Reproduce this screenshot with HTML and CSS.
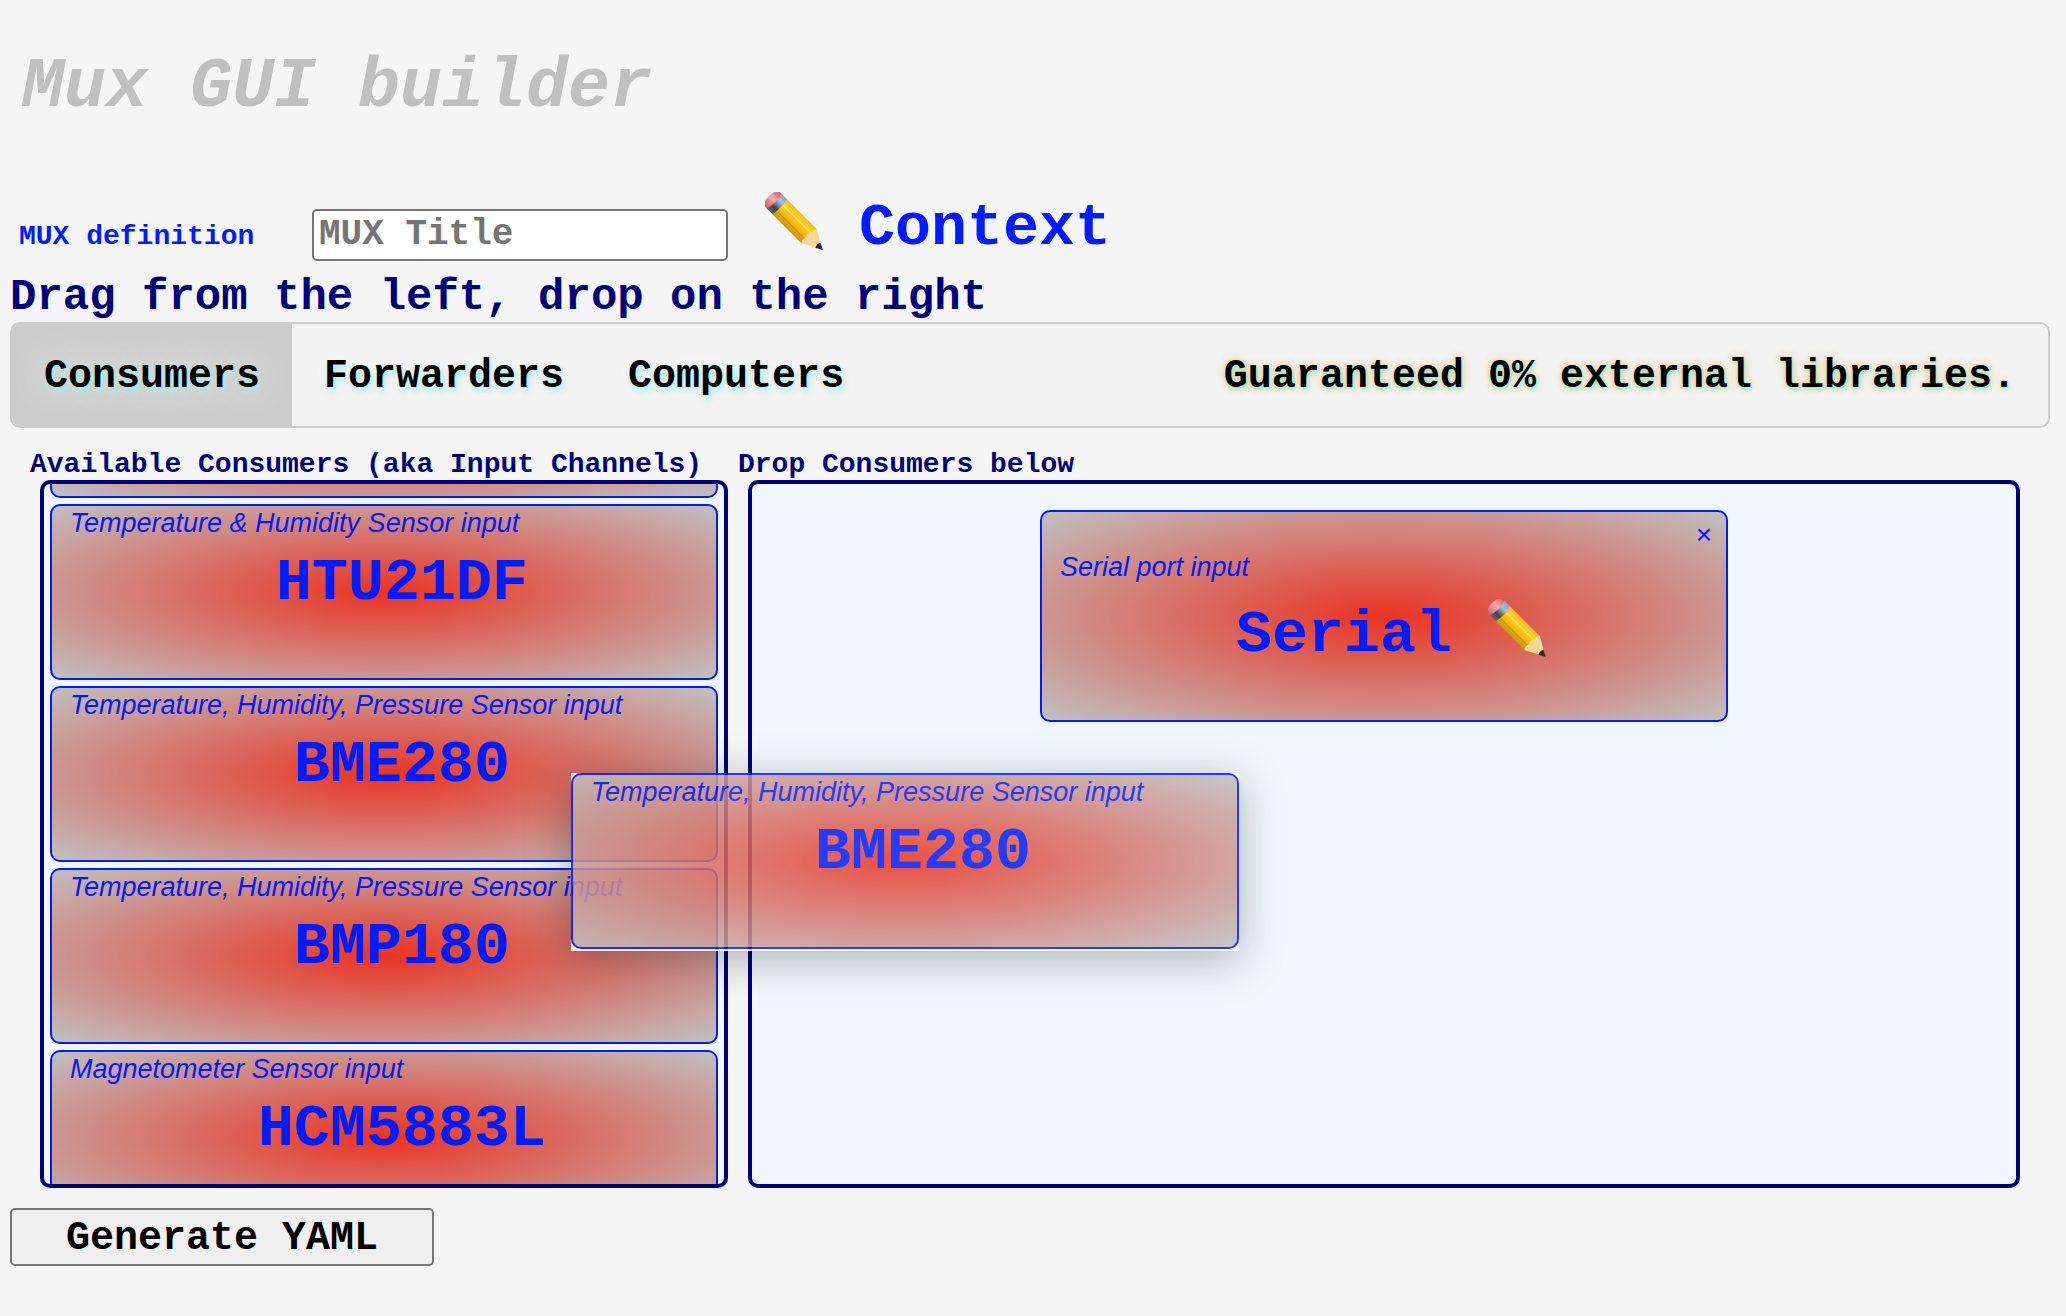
FILE: index.html
```
<!DOCTYPE html>
<html lang="en">
<head>
<meta charset="utf-8">
<title>Mux GUI builder</title>
<link rel="stylesheet" href="styles.css">
</head>
<body>
<svg class="defs" width="0" height="0" aria-hidden="true">
  <defs>
    <linearGradient id="wood" x1="0" y1="0" x2="0" y2="1"><stop offset="0" stop-color="#f5bd12"/><stop offset=".3" stop-color="#ffd02a"/><stop offset=".6" stop-color="#f7bb0a"/><stop offset="1" stop-color="#cf8f0c"/></linearGradient>
    <linearGradient id="metal" x1="0" y1="0" x2="0" y2="1"><stop offset="0" stop-color="#8aa6c6"/><stop offset=".3" stop-color="#a9c0d8"/><stop offset=".55" stop-color="#6d7784"/><stop offset=".7" stop-color="#3d4045"/><stop offset="1" stop-color="#6b6b6b"/></linearGradient>
    <linearGradient id="rubber" x1="0" y1="0" x2="0" y2="1"><stop offset="0" stop-color="#cf5f6c"/><stop offset=".45" stop-color="#f7a9ac"/><stop offset="1" stop-color="#c4606a"/></linearGradient>
  </defs>
  <symbol id="pencil" viewBox="0 0 58 58">
    <g transform="translate(29 29) rotate(45) scale(1 1.1)">
      <path d="M-26-9.500H-30Q-34-9-35-4Q-36 0-35 4Q-34 9-30 9.500H-26Z" fill="url(#rubber)"/>
      <path d="M-28-9.500H-19V9.500H-28Q-25 0-28-9.500Z" fill="url(#metal)"/>
      <path d="M-20-9.500H22L26-3 25 5 21 9.500H-20Q-17 0-20-9.500Z" fill="url(#wood)"/>
      <path d="M-18-3.500H22V-2.500H-18Z" fill="#ffe674"/>
      <path d="M-18 4H22V5H-18Z" fill="#c98a08"/>
      <path d="M22-9.500L40 0 21 9.500Q18 6 20 3 17-1 21-4 19-7 22-9.500Z" fill="#f8d795"/>
      <path d="M34-3L41 0 34 3.500Q32 0 34-3Z" fill="#2b2b2b"/>
    </g>
  </symbol>
</svg>

<h1 class="title">Mux GUI builder</h1>

<div class="definition">
  <label class="definition-label" for="mux-title">MUX definition</label>
  <input class="definition-input" id="mux-title" type="text" placeholder="MUX Title">
  <button class="context" type="button"><svg class="pencil" aria-hidden="true"><use href="#pencil"/></svg><span class="context-text">Context</span></button>
</div>

<h2 class="hint">Drag from the left, drop on the right</h2>

<nav class="tabs">
  <button class="tab active" type="button">Consumers</button>
  <button class="tab" type="button">Forwarders</button>
  <button class="tab" type="button">Computers</button>
  <span class="motto">Guaranteed 0% external libraries.</span>
</nav>

<main class="board">
  <section class="source">
    <h3 class="column-title">Available Consumers (aka Input Channels)</h3>
    <div class="list">
      <article class="card"></article>
      <article class="card"><p class="kind">Temperature &amp; Humidity Sensor input</p><p class="name">HTU21DF</p></article>
      <article class="card"><p class="kind">Temperature, Humidity, Pressure Sensor input</p><p class="name">BME280</p></article>
      <article class="card"><p class="kind">Temperature, Humidity, Pressure Sensor input</p><p class="name">BMP180</p></article>
      <article class="card"><p class="kind">Magnetometer Sensor input</p><p class="name">HCM5883L</p></article>
    </div>
  </section>
  <section class="target">
    <h3 class="column-title">Drop Consumers below</h3>
    <div class="dropzone">
      <article class="card dropped">
        <button class="close" type="button" aria-label="Remove">×</button>
        <p class="kind">Serial port input</p>
        <div class="name-row"><p class="name">Serial</p><button class="edit" type="button" aria-label="Edit"><svg class="pencil" aria-hidden="true"><use href="#pencil"/></svg></button></div>
      </article>
    </div>
  </section>
  <div class="ghost">
    <article class="card"><p class="kind">Temperature, Humidity, Pressure Sensor input</p><p class="name">BME280</p></article>
  </div>
</main>

<button class="generate" type="button">Generate YAML</button>
</body>
</html>
```
FILE: styles.css
```
* { box-sizing: border-box; }

body {
  margin: 0;
  padding: 48px 16px 48px 10px;
  background: #f5f5f5;
  font-family: "Liberation Mono", "Courier New", monospace;
  font-weight: bold;
}

h1, h2, h3, p { margin: 0; }

button {
  font: inherit;
  color: inherit;
  background: none;
  border: 0;
  padding: 0;
}

.defs { position: absolute; }

.title {
  padding-left: 12px;
  font-size: 70px;
  line-height: 80px;
  font-style: italic;
  color: silver;
}

.definition {
  display: flex;
  align-items: baseline;
  margin-top: 64px;
  padding-left: 9px;
  height: 80px;
  color: #001cf9;
}

.definition-label {
  width: 293px;
  font-size: 28px;
}

.definition-input {
  width: 416px;
  height: 52px;
  padding: 0 5px;
  border: 2px solid #767676;
  border-radius: 5px;
  background: #fff;
  font: inherit;
  font-size: 36px;
}

.definition-input::placeholder { color: #757575; opacity: 1; }

.context {
  margin-left: 37px;
  font-size: 60px;
  line-height: 68px;
  white-space: nowrap;
}

.context-text { margin-left: 36px; }

.pencil {
  width: 58px;
  height: 58px;
  vertical-align: -6px;
}

.hint {
  font-size: 44px;
  line-height: 50px;
  color: #00007b;
}

.tabs {
  display: flex;
  align-items: stretch;
  height: 106px;
  border: 2px solid #ccc;
  border-radius: 10px;
  background: #f2f2f2;
  font-size: 40px;
  overflow: hidden;
}

.tab {
  padding: 2px 32px 0;
  text-shadow: 2px 4px 6px #a8ecec, 0 0 40px #fff;
}

.tab.active { background: #ccc; }

.motto {
  margin-left: auto;
  padding: 2px 32px 0 0;
  align-self: center;
  text-shadow: 1px 2px 4px #8fe8d8, 0 0 10px #ffc070;
}

.board {
  position: relative;
  display: flex;
  gap: 20px;
  margin-top: 22px;
  padding: 0 30px;
}

.source { width: 688px; }
.target { flex: 1; }

.column-title {
  margin-left: -10px;
  font-size: 28px;
  line-height: 30px;
  white-space: nowrap;
  color: #00007b;
}

.list, .dropzone {
  height: 708px;
  border: 4px solid #00007b;
  border-radius: 10px;
  background: #f0f8ff;
  overflow: hidden;
}

.list {
  display: flex;
  flex-direction: column;
  justify-content: flex-start;
  gap: 6px;
  padding: 0 6px;
}

.dropzone { padding-top: 26px; }

.card {
  flex: none;
  height: 176px;
  padding: 0 18px;
  border: 2px solid #001cf9;
  border-radius: 10px;
  background: radial-gradient(#ea3323, silver);
  color: #001cf9;
}

.list .card:first-child { margin-top: -162px; }

.kind {
  font: italic 27px/34px "Liberation Sans", Arial, sans-serif;
}

.name {
  padding-left: 36px;
  font-size: 60px;
  line-height: 86px;
  text-align: center;
}

.dropped {
  width: 688px;
  height: 212px;
  margin: 0 auto;
  padding: 8px 14px 0 18px;
}

.close {
  display: block;
  margin-left: auto;
  font: 28px/30px "Liberation Sans", Arial, sans-serif;
}

.name-row {
  display: flex;
  justify-content: center;
  align-items: baseline;
  gap: 36px;
  margin-top: 8px;
  padding-right: 26px;
}

.ghost {
  position: absolute;
  top: 323px;
  left: 561px;
  width: 668px;
  padding-bottom: 2px;
  background: #fff;
  opacity: .85;
  box-shadow: 0 8px 40px rgba(0, 0, 0, .34);
}

.generate {
  display: block;
  width: 424px;
  height: 58px;
  margin-top: 20px;
  padding-top: 2px;
  border: 2px solid #767676;
  border-radius: 5px;
  background: #efefef;
  font-size: 40px;
  color: #000;
}
```
